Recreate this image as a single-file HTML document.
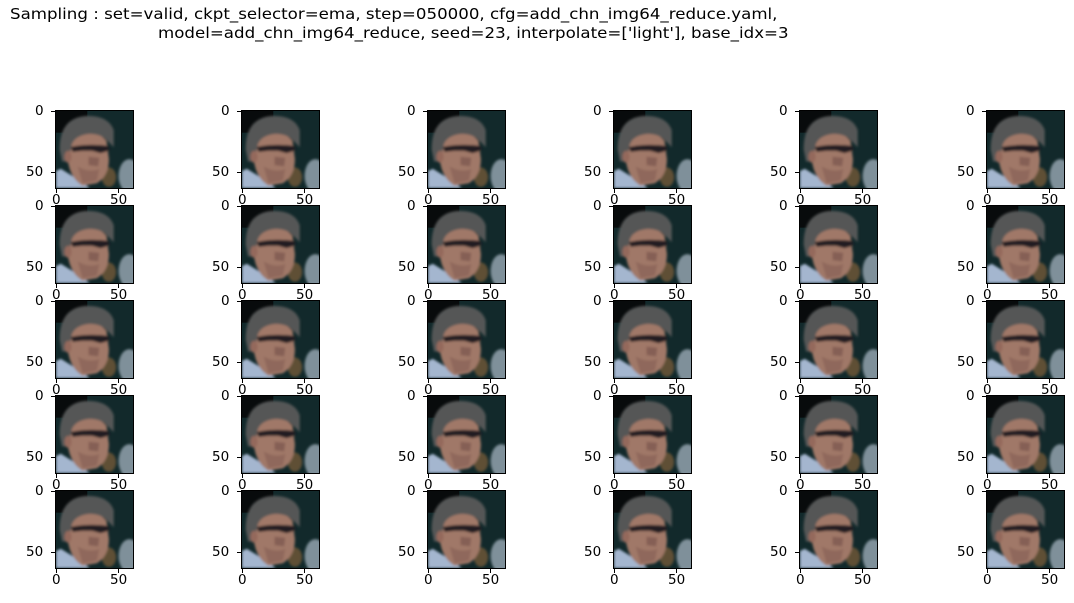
<!DOCTYPE html>
<html><head><meta charset="utf-8"><style>
body{margin:0;width:1074px;height:603px;background:#fff;position:relative;overflow:hidden;font-family:"DejaVu Sans","Liberation Sans",sans-serif;}
.t{position:absolute;left:10px;top:5px;font-size:15px;line-height:18px;color:#000;white-space:pre;transform-origin:0 0;transform:scaleX(1.11)}
.ax{position:absolute;width:79px;height:79px;border:1px solid #000;box-sizing:border-box}
.ax svg{display:block;width:77px;height:77px}
.lb{position:absolute;font-size:13.5px;color:#000;line-height:14px}
.tk{position:absolute;background:#000}
</style></head><body>
<div class="t">Sampling : set=valid, ckpt_selector=ema, step=050000, cfg=add_chn_img64_reduce.yaml,</div>
<div class="t" style="left:158px;top:24px">model=add_chn_img64_reduce, seed=23, interpolate=['light'], base_idx=3</div>
<svg width="0" height="0" style="position:absolute">
<defs>
<filter id="bl"><feGaussianBlur stdDeviation="1.2"/></filter>
<symbol id="face" viewBox="0 0 64 64">
<rect width="64" height="64" fill="#12292b"/>
<rect x="0" y="0" width="26" height="18" fill="#080b0c"/>
<g filter="url(#bl)">
<ellipse cx="61" cy="54" rx="9" ry="14" fill="#7f909a"/>
<ellipse cx="44" cy="55" rx="6" ry="8" fill="#5e5036"/>
<path d="M4 48 L20 58 L28 64 L0 64 L0 50Z" fill="#a4b6cf"/>
<path d="M3 32 Q3 5 26 4 Q44 4 48 16 L48 30 L40 22 Q30 20 18 24 L12 42 L5 42Z" fill="#555656"/>
<path d="M13 28 Q16 20 28 19 Q38 19 42 25 L44 40 Q44 54 34 60 L22 62 Q12 56 10 42Z" fill="#a07868"/>
<path d="M18 46 Q28 52 36 48 L34 58 L22 60Z" fill="#8f685c"/>
<path d="M27 38 L36 39 L35 46 L27 45Z" fill="#855f55"/>
<path d="M12 30 Q26 27 44 29 L44 33 L37 35 L30 33 L22 33 L14 34Z" fill="#231f20"/>
<ellipse cx="10" cy="38" rx="3" ry="5" fill="#94695c"/>
</g>
</symbol>
</defs></svg>
<div id="g"></div>
<script>
var xs=[55,241,427,613,799,986],ys=[110,205,300,395,490],h='';
ys.forEach(function(y,r){xs.forEach(function(x){
h+='<div class="ax" style="left:'+x+'px;top:'+y+'px"><svg viewBox="0 0 64 64" preserveAspectRatio="none"><use href="#face"/></svg></div>';
h+='<div class="tk" style="left:'+(x-4)+'px;top:'+(y+1)+'px;width:4px;height:1px"></div>';
h+='<div class="tk" style="left:'+(x-4)+'px;top:'+(y+62)+'px;width:4px;height:1px"></div>';
h+='<div class="lb" style="left:'+(x-20)+'px;top:'+(y-6)+'px">0</div>';
h+='<div class="lb" style="left:'+(x-29)+'px;top:'+(y+55)+'px">50</div>';
h+='<div class="tk" style="left:'+(x+1)+'px;top:'+(y+79)+'px;width:1px;height:4px"></div>';
h+='<div class="tk" style="left:'+(x+63)+'px;top:'+(y+79)+'px;width:1px;height:4px"></div>';
h+='<div class="lb" style="left:'+(x-3)+'px;top:'+(y+83)+'px">0</div>';
h+='<div class="lb" style="left:'+(x+55)+'px;top:'+(y+83)+'px">50</div>';
});});
document.getElementById('g').innerHTML=h;
</script>
</body></html>
